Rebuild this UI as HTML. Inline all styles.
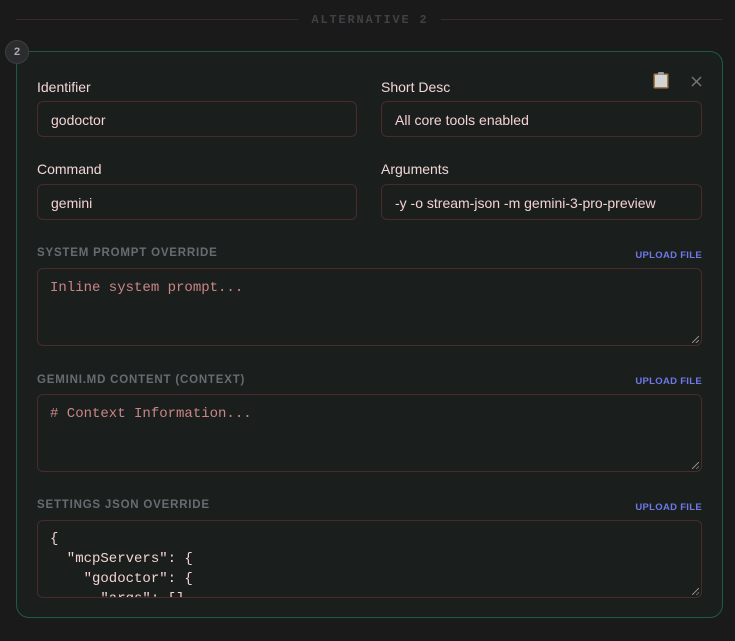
<!DOCTYPE html>
<html><head><meta charset="utf-8"><style>
*{box-sizing:border-box;margin:0;padding:0}
body{width:735px;height:641px;background:#1a1a1a;font-family:"Liberation Sans",sans-serif;position:relative;overflow:hidden}
.abs{position:absolute}
.line{height:1px;background:#3a2a2a;top:19px}
.alt{top:13px;left:300px;width:140px;text-align:center;font:bold 12px "Liberation Mono",monospace;letter-spacing:1.8px;color:#404145}
.card{left:16px;top:51px;width:707px;height:567px;border:1px solid #1d5a43;border-radius:13px;background:#1a1f1e}
.badge{left:5px;top:40px;width:24px;height:24px;border-radius:50%;background:#2a2c2e;border:1px solid #3c3f42;color:#a8acb2;font:bold 11px "Liberation Sans",sans-serif;text-align:center;line-height:22px}
.lbl{font-size:14px;color:#f2d6d6}
.inp{height:36px;border:1px solid #4b2a2a;border-radius:6px;background:#1a1f1e;color:#f5d2d2;font-size:14px;line-height:37px;padding-left:13px}
.sec{font:bold 11.5px "Liberation Sans",sans-serif;letter-spacing:0.8px;color:#686b70}
.up{font:bold 9.5px "Liberation Sans",sans-serif;letter-spacing:0.3px;color:#6f78e8;right:33px}
.ta{left:37px;width:665px;height:78px;border:1px solid #4b2a2a;border-radius:6px;background:#1a1f1e;font:14px "Liberation Mono",monospace;color:#c98585;padding:10px 12px;overflow:hidden;white-space:pre;line-height:19px}
.grip{position:absolute;right:2px;bottom:2px;width:7px;height:7px;background:linear-gradient(135deg,transparent 45%,#888 45%,#888 55%,transparent 55%,transparent 75%,#888 75%,#888 85%,transparent 85%)}
</style></head><body>
<div class="abs line" style="left:16px;width:282px"></div>
<div class="abs line" style="left:441px;width:281px"></div>
<div class="abs alt">ALTERNATIVE 2</div>
<div class="abs card"></div>
<div class="abs badge">2</div>
<svg class="abs" style="left:652px;top:71px" width="18" height="18" viewBox="0 0 18 18"><rect x="1.5" y="2.5" width="15" height="15" rx="1" fill="#a07a4a"/><rect x="3" y="4" width="12" height="12" fill="#d4d4d4"/><rect x="6" y="1" width="6" height="3" rx="1" fill="#999"/></svg>
<svg class="abs" style="left:691px;top:76px" width="11" height="11" viewBox="0 0 11 11"><path d="M1 1L10 10M10 1L1 10" stroke="#777" stroke-width="1.4"/></svg>

<div class="abs lbl" style="left:37px;top:79px">Identifier</div>
<div class="abs lbl" style="left:381px;top:79px">Short Desc</div>
<div class="abs inp" style="left:37px;top:101px;width:320px">godoctor</div>
<div class="abs inp" style="left:381px;top:101px;width:321px">All core tools enabled</div>
<div class="abs lbl" style="left:37px;top:161px">Command</div>
<div class="abs lbl" style="left:381px;top:161px">Arguments</div>
<div class="abs inp" style="left:37px;top:184px;width:320px">gemini</div>
<div class="abs inp" style="left:381px;top:184px;width:321px;font-size:14px">-y -o stream-json -m gemini-3-pro-preview</div>

<div class="abs sec" style="left:37px;top:247px">SYSTEM PROMPT OVERRIDE</div>
<div class="abs up" style="top:250px">UPLOAD FILE</div>
<div class="abs ta" style="top:268px">Inline system prompt...<div class="grip"></div></div>

<div class="abs sec" style="left:37px;top:374px">GEMINI.MD CONTENT (CONTEXT)</div>
<div class="abs up" style="top:376px">UPLOAD FILE</div>
<div class="abs ta" style="top:394px"># Context Information...<div class="grip"></div></div>

<div class="abs sec" style="left:37px;top:499px">SETTINGS JSON OVERRIDE</div>
<div class="abs up" style="top:502px">UPLOAD FILE</div>
<div class="abs ta" style="top:520px;color:#f2d2d2;padding-top:8px;line-height:20px">{
  "mcpServers": {
    "godoctor": {
      "args": [],<div class="grip"></div></div>
</body></html>
